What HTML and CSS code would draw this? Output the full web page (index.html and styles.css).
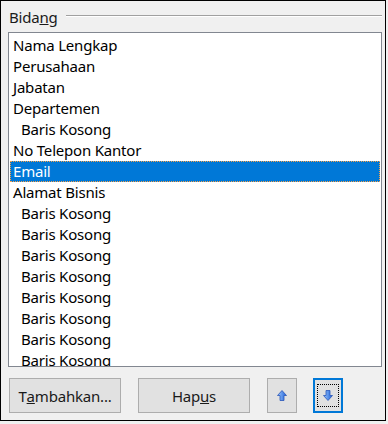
FILE: index.html
```html
<!DOCTYPE html>
<html>
	<head>
		<meta charset="UTF-8"/>
		<title>Bidang</title>
		<link rel="stylesheet" href="styles.css">
	</head>
	<body>
		<div class="window">
			<div class="group-head">
				<span class="group-label">Bida<u>n</u>g</span>
				<span class="group-line"></span>
			</div>
			<div class="list">
				<div class="item">Nama Lengkap</div>
				<div class="item">Perusahaan</div>
				<div class="item">Jabatan</div>
				<div class="item">Departemen</div>
				<div class="item sub">Baris Kosong</div>
				<div class="item">No Telepon Kantor</div>
				<div class="item selected">Email</div>
				<div class="item">Alamat Bisnis</div>
				<div class="item sub">Baris Kosong</div>
				<div class="item sub">Baris Kosong</div>
				<div class="item sub">Baris Kosong</div>
				<div class="item sub">Baris Kosong</div>
				<div class="item sub">Baris Kosong</div>
				<div class="item sub">Baris Kosong</div>
				<div class="item sub">Baris Kosong</div>
				<div class="item sub">Baris Kosong</div>
			</div>
			<div class="buttons">
				<span class="btn wide">T<u>a</u>mbahkan...</span>
				<span class="btn wide">Hap<u>u</u>s</span>
				<span class="btn small">
					<svg width="10" height="11" viewBox="0 0 10 11">
						<defs>
							<linearGradient id="g1" x1="0" y1="0" x2="1" y2="0">
								<stop offset="0" stop-color="#9cc8ff"/>
								<stop offset="1" stop-color="#1d5fd6"/>
							</linearGradient>
						</defs>
						<path d="M5 0.5 L9.5 5.5 L7 5.5 L7 10.5 L3 10.5 L3 5.5 L0.5 5.5 Z" fill="url(#g1)" stroke="#2a56b8" stroke-width="0.8"/>
					</svg>
				</span>
				<span class="btn small focus">
					<span class="focus-rect">
						<svg width="10" height="11" viewBox="0 0 10 11">
							<defs>
								<linearGradient id="g2" x1="0" y1="0" x2="1" y2="0">
									<stop offset="0" stop-color="#9cc8ff"/>
									<stop offset="1" stop-color="#1d5fd6"/>
								</linearGradient>
							</defs>
							<path d="M5 10.5 L9.5 5.5 L7 5.5 L7 0.5 L3 0.5 L3 5.5 L0.5 5.5 Z" fill="url(#g2)" stroke="#2a56b8" stroke-width="0.8"/>
						</svg>
					</span>
				</span>
			</div>
		</div>
	</body>
</html>
```
FILE: styles.css
```css
* {
	margin: 0;
	padding: 0;
	box-sizing: border-box;
}
html, body {
	background: #f0f0f0;
}
body {
	font: 15px "Noto Sans", "Open Sans", sans-serif;
	letter-spacing: -0.2px;
	color: #000;
}
.window {
	width: 386px;
	height: 421px;
	border: 1px solid #000;
	background: #f0f0f0;
	padding: 6px 3px 0 7px;
	display: flex;
	flex-direction: column;
}
.group-head {
	display: flex;
	align-items: center;
	height: 20px;
	margin-bottom: 5px;
}
.group-label {
	padding-left: 1px;
	line-height: 20px;
	color: #1a1a1a;
}
.group-line {
	flex: 1;
	height: 2px;
	margin-left: 8px;
	margin-top: -2px;
	border-top: 1px solid #a0a0a0;
	border-bottom: 1px solid #fff;
}
.list {
	height: 335px;
	border: 1px solid #828790;
	background: #fff;
	padding: 2px 1px;
	overflow: hidden;
}
.item {
	height: 21px;
	line-height: 20px;
	padding-left: 3px;
	white-space: nowrap;
}
.item.sub {
	padding-left: 11px;
}
.item.selected {
	background: #0078d7;
	color: #fff;
	outline: 1px dotted #f7a24a;
	outline-offset: -1px;
}
.buttons {
	display: flex;
	margin-top: 11px;
	padding-left: 1px;
}
.btn {
	height: 35px;
	background: #e1e1e1;
	border: 1px solid #adadad;
	display: flex;
	align-items: center;
	justify-content: center;
	color: #1a1a1a;
}
.btn.wide {
	width: 112px;
	margin-right: 17px;
}
.btn.small {
	width: 30px;
	margin-right: 16px;
}
.btn.focus {
	border: 2px solid #0078d7;
}
.focus-rect {
	width: 22px;
	height: 23px;
	border: 1px dotted #000;
	display: flex;
	align-items: center;
	justify-content: center;
}
svg {
	display: block;
}
```
